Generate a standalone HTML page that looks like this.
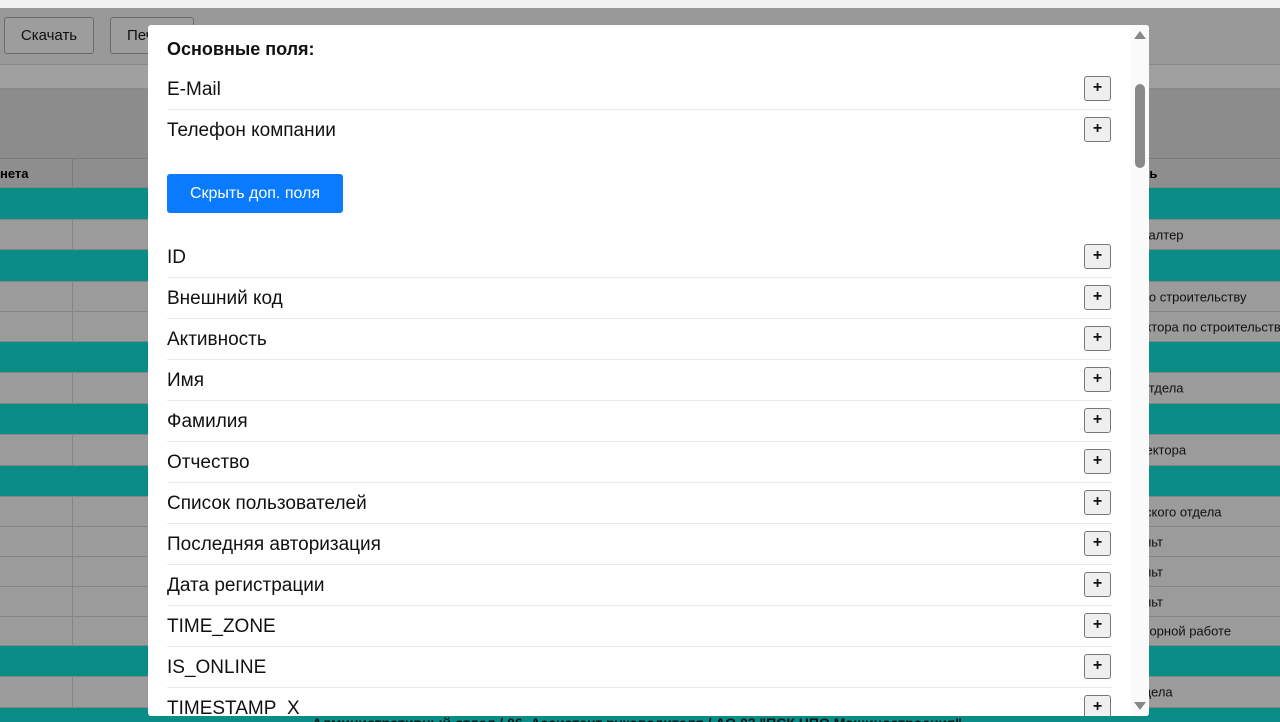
<!DOCTYPE html>
<html><head><meta charset="utf-8"><style>
*{margin:0;padding:0;box-sizing:border-box}
html,body{width:1280px;height:722px;overflow:hidden}
body{position:relative;background:#999;font-family:"Liberation Sans",sans-serif}
.a{position:absolute}
.row{position:absolute;left:0;width:1280px;border-bottom:1px solid #858585;overflow:hidden}
.g{background:#9b9b9b}
.t{background:#0a8c87}
.g::before{content:"";position:absolute;left:72px;top:0;bottom:0;border-left:1px solid #858585}
.rt{position:absolute;left:1131px;font-size:13px;color:#111;white-space:nowrap;top:50%;transform:translateY(-50%)}
.btn{position:absolute;top:17px;height:37px;border:1px solid #6b6b6b;border-radius:3px;background:#9d9d9d;font-size:15px;color:#111;line-height:35px;text-align:center}
.modal{position:absolute;left:148px;top:25px;width:1001px;height:691px;background:#fff;border-radius:3px;overflow:hidden}
.it{position:absolute;left:19px;width:945px;height:41px;border-bottom:1px solid #eaeaea;font-size:19px;color:#111;line-height:42px}
.pl{position:absolute;left:936px;width:27px;height:25px;border:1px solid #777;border-radius:3px;background:#efefef;font-size:16px;font-weight:bold;text-align:center;line-height:22px;color:#111}
</style></head><body>
<div class="a" style="left:0;top:0;width:1280px;height:8px;background:#f2f2f2"></div>
<div class="btn" style="left:4px;width:90px">Скачать</div>
<div class="btn" style="left:110px;width:84px;text-align:left;padding-left:16px">Печать</div>
<div class="a" style="left:0;top:64px;width:1280px;height:25px;background:#a0a0a0;border-top:1px solid #888;border-bottom:1px solid #888"></div>
<div class="a" style="left:0;top:89px;width:1280px;height:69px;background:#8c8c8c"></div>
<div class="row" style="top:158px;height:30px;background:#8e8e8e;border-top:1px solid #7a7a7a"><div class="a" style="left:72px;top:0;bottom:0;border-left:1px solid #7a7a7a"></div><span class="a" style="left:0;top:7px;font-size:13px;font-weight:bold">нета</span><span class="a" style="left:1128px;top:7px;font-size:13px;font-weight:bold">ость</span></div>
<div class="row t" style="top:188px;height:32px"></div>
<div class="row g" style="top:220px;height:30px"><span class="rt">ухгалтер</span></div>
<div class="row t" style="top:250px;height:32px"></div>
<div class="row g" style="top:282px;height:30px"><span class="rt">а по строительству</span></div>
<div class="row g" style="top:312px;height:30px"><span class="rt">ректора по строительству</span></div>
<div class="row t" style="top:342px;height:31px"></div>
<div class="row g" style="top:373px;height:31px"><span class="rt">а отдела</span></div>
<div class="row t" style="top:404px;height:31px"></div>
<div class="row g" style="top:435px;height:31px"><span class="rt">иректора</span></div>
<div class="row t" style="top:466px;height:31px"></div>
<div class="row g" style="top:497px;height:30px"><span class="rt">ческого отдела</span></div>
<div class="row g" style="top:527px;height:30px"><span class="rt">сульт</span></div>
<div class="row g" style="top:557px;height:30px"><span class="rt">сульт</span></div>
<div class="row g" style="top:587px;height:30px"><span class="rt">сульт</span></div>
<div class="row g" style="top:617px;height:29px"><span class="rt">говорной работе</span></div>
<div class="row t" style="top:646px;height:31px"></div>
<div class="row g" style="top:677px;height:31px"><span class="rt">отдела</span></div>
<div class="row t" style="top:708px;height:14px;border:none"><span class="a" style="left:312px;top:7px;font-size:14px;font-weight:bold;color:#111">Административный отдел / 06. Ассистент руководителя / АО 03 "ПСК НПО Машиностроения"</span></div>

<div class="modal">
<div class="a" style="left:19px;top:14px;font-size:18px;font-weight:bold;color:#111">Основные поля:</div>
<div class="it" style="top:44px">E-Mail</div><div class="pl" style="top:51px">+</div>
<div class="it" style="top:85px;border:none">Телефон компании</div><div class="pl" style="top:92px">+</div>
<div class="a" style="left:19px;top:149px;width:176px;height:39px;background:#0a7bff;border-radius:3px;color:#fff;font-size:16px;text-align:center;line-height:39px">Скрыть доп. поля</div>
<div class="it" style="top:212px">ID</div><div class="pl" style="top:219px">+</div>
<div class="it" style="top:253px">Внешний код</div><div class="pl" style="top:260px">+</div>
<div class="it" style="top:294px">Активность</div><div class="pl" style="top:301px">+</div>
<div class="it" style="top:335px">Имя</div><div class="pl" style="top:342px">+</div>
<div class="it" style="top:376px">Фамилия</div><div class="pl" style="top:383px">+</div>
<div class="it" style="top:417px">Отчество</div><div class="pl" style="top:424px">+</div>
<div class="it" style="top:458px">Список пользователей</div><div class="pl" style="top:465px">+</div>
<div class="it" style="top:499px">Последняя авторизация</div><div class="pl" style="top:506px">+</div>
<div class="it" style="top:540px">Дата регистрации</div><div class="pl" style="top:547px">+</div>
<div class="it" style="top:581px">TIME_ZONE</div><div class="pl" style="top:588px">+</div>
<div class="it" style="top:622px">IS_ONLINE</div><div class="pl" style="top:629px">+</div>
<div class="it" style="top:663px">TIMESTAMP_X</div><div class="pl" style="top:670px">+</div>
<div class="a" style="left:983px;top:0;width:18px;height:691px;background:#fafafa"></div>
<div class="a" style="left:987px;top:59px;width:10px;height:84px;background:#8a8a8a;border-radius:5px"></div>
<div class="a" style="left:986px;top:6px;width:0;height:0;border-left:6px solid transparent;border-right:6px solid transparent;border-bottom:8px solid #888"></div>
<div class="a" style="left:986px;top:677px;width:0;height:0;border-left:6px solid transparent;border-right:6px solid transparent;border-top:8px solid #888"></div>
</div>
</body></html>
